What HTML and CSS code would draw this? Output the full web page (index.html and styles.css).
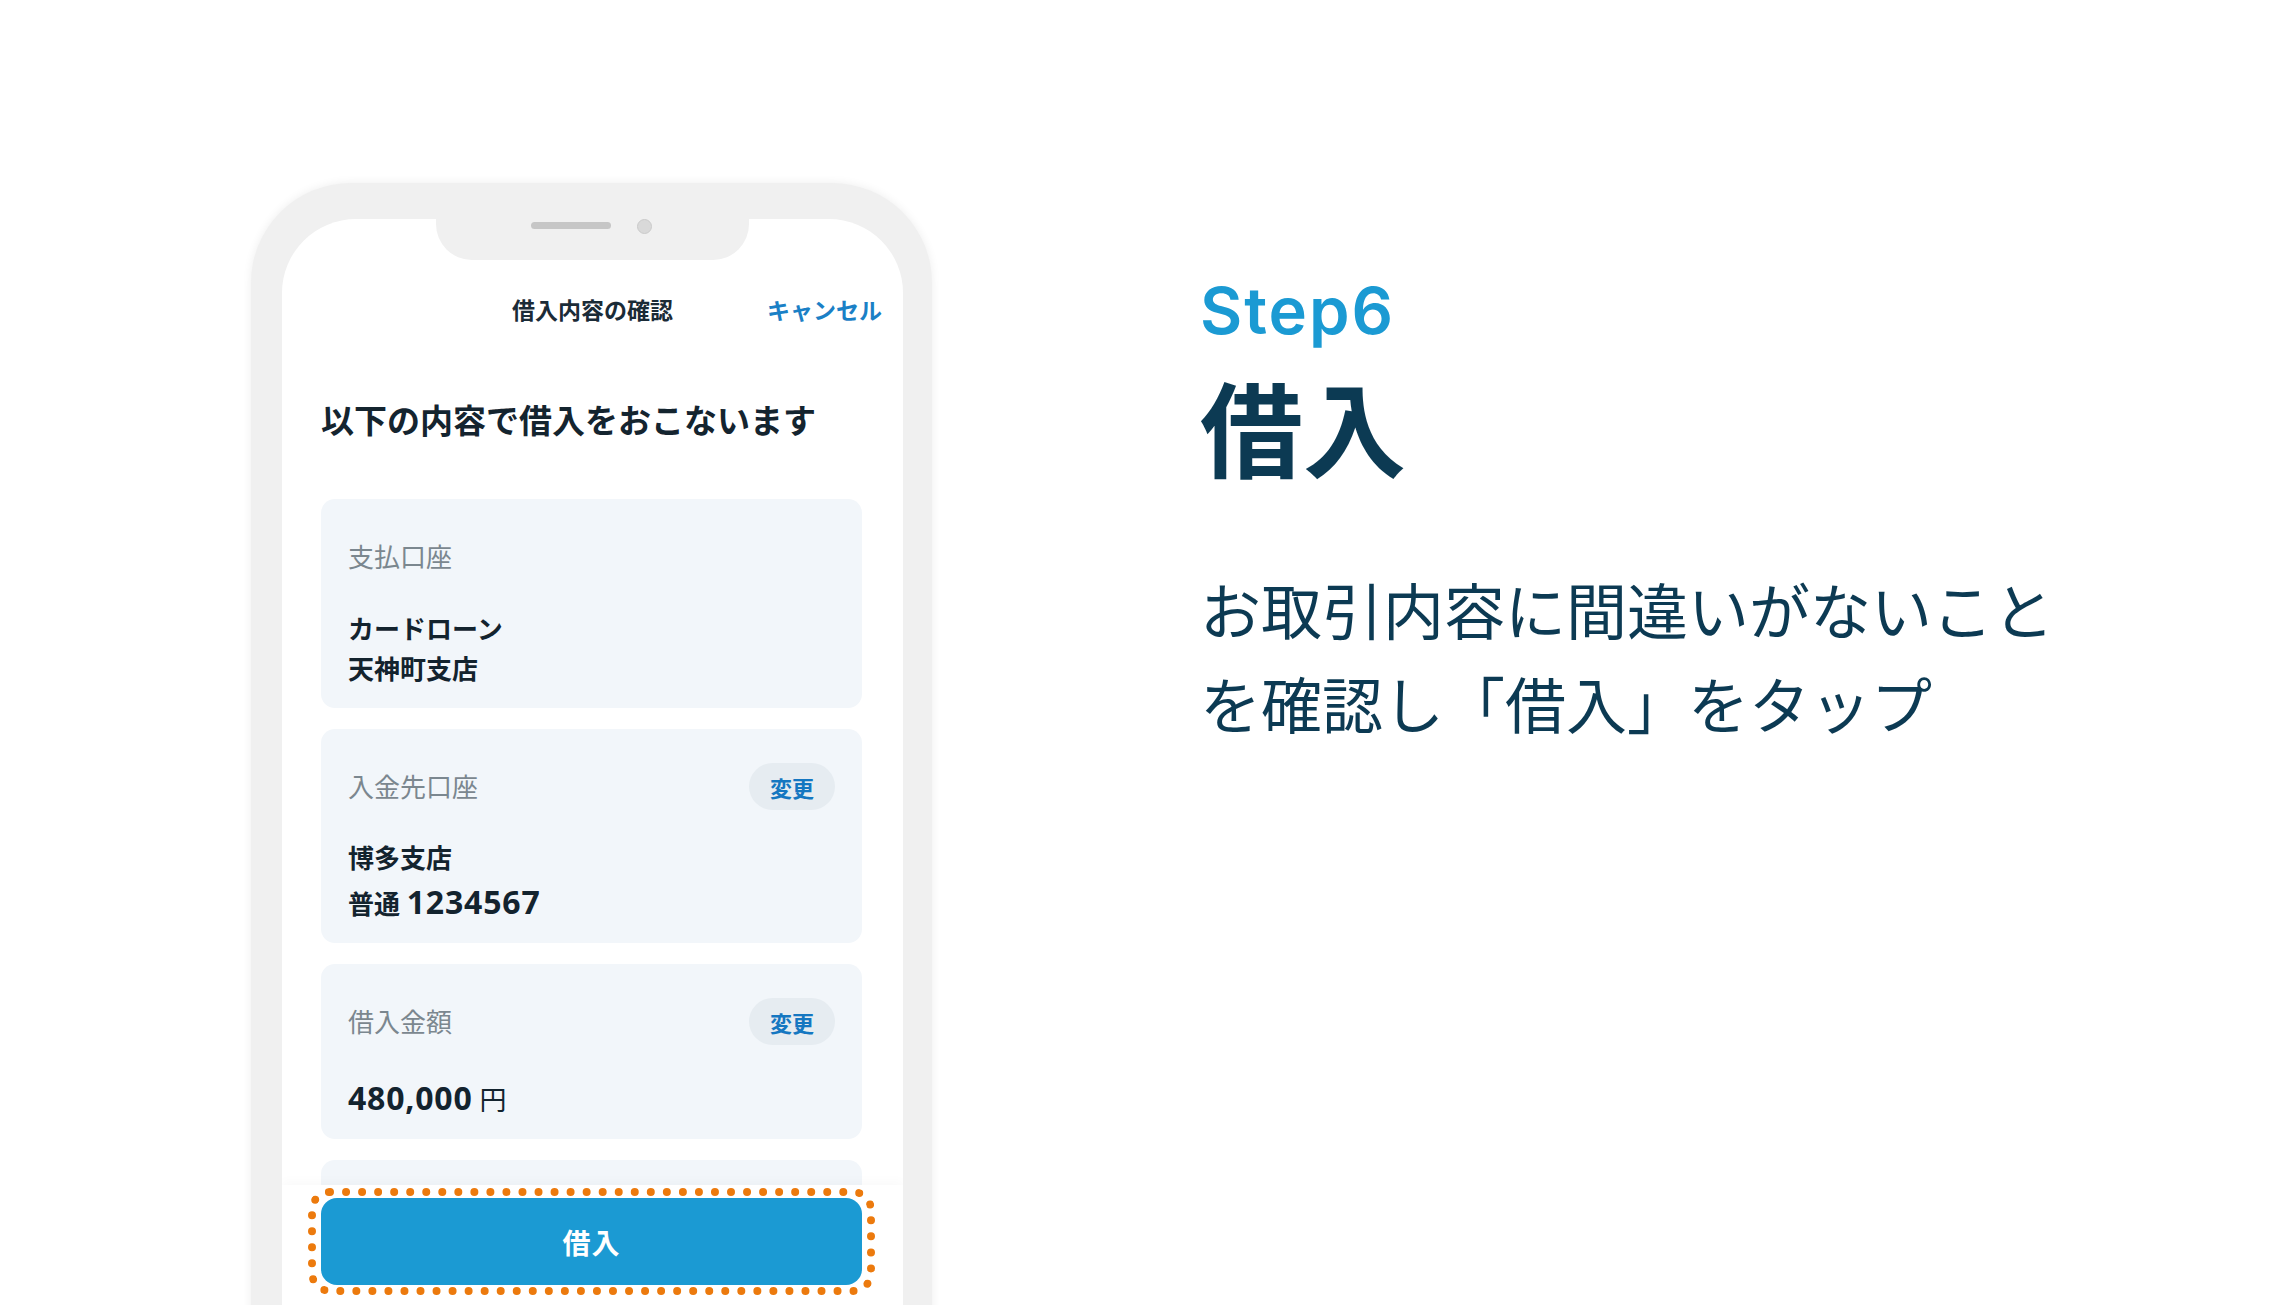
FILE: index.html
```html
<!DOCTYPE html>
<html lang="ja">
<head>
<meta charset="utf-8">
<title>Step6 借入</title>
<link rel="stylesheet" href="styles.css">
</head>
<body>
<div class="page">
  <div class="phone">
    <div class="screen">
      <div class="notch">
        <span class="speaker"></span>
        <span class="camera"></span>
      </div>
      <div class="nav">
        <span class="nav-title">借入内容の確認</span>
        <span class="nav-cancel">キャンセル</span>
      </div>
      <h1 class="lead">以下の内容で借入をおこないます</h1>
      <div class="cards">
        <div class="card">
          <div class="card-head"><span class="label">支払口座</span></div>
          <div class="values v40">
            <div>カードローン</div>
            <div>天神町支店</div>
          </div>
        </div>
        <div class="card">
          <div class="card-head"><span class="label">入金先口座</span><span class="pill">変更</span></div>
          <div class="values v43">
            <div>博多支店</div>
            <div>普通 <span class="num">1234567</span></div>
          </div>
        </div>
        <div class="card">
          <div class="card-head"><span class="label">借入金額</span><span class="pill">変更</span></div>
          <div class="values amount">
            <div><span class="num">480,000</span><span class="yen">円</span></div>
          </div>
        </div>
        <div class="card card-empty"></div>
      </div>
      <div class="footer">
        <div class="focus-ring">
          <div class="primary-btn">借入</div>
        </div>
      </div>
    </div>
  </div>
  <div class="info">
    <div class="step">Step6</div>
    <div class="title">借入</div>
    <p class="desc">お取引内容に間違いがないことを確認し「借入」をタップ</p>
  </div>
</div>
</body>
</html>
```
FILE: styles.css
```css
* { box-sizing: border-box; }
html, body {
  margin: 0;
  padding: 0;
  background: #ffffff;
}
body {
  width: 2290px;
  height: 1305px;
  overflow: hidden;
  font-family: "Noto Sans", "Noto Sans CJK JP", sans-serif;
  color: #13232e;
}
.page {
  display: flex;
  align-items: flex-start;
  padding-left: 251px;
  padding-top: 183px;
}
.phone {
  width: 681px;
  height: 1300px;
  background: #f0f0f0;
  border-radius: 100px 100px 0 0;
  padding: 36px 29px 0 31px;
  box-shadow: 0 0 10px rgba(0, 0, 0, 0.07);
  flex: none;
}
.screen {
  position: relative;
  width: 621px;
  height: 1264px;
  background: #ffffff;
  border-radius: 74px 74px 0 0;
  padding-top: 70px;
  overflow: hidden;
}
.notch {
  position: absolute;
  top: 0;
  left: 154px;
  width: 313px;
  height: 41px;
  background: #f0f0f0;
  border-radius: 0 0 36px 36px;
}
.speaker {
  position: absolute;
  left: 95px;
  top: 3px;
  width: 80px;
  height: 7px;
  border-radius: 4px;
  background: #c6c6c6;
}
.camera {
  position: absolute;
  left: 201px;
  top: 0px;
  width: 15px;
  height: 15px;
  border-radius: 50%;
  background: #d9d9d9;
  border: 1px solid #cacaca;
}
.nav {
  position: relative;
  height: 42px;
  display: flex;
  align-items: center;
  justify-content: center;
}
.nav-title {
  font-size: 23px;
  font-weight: 700;
  line-height: 42px;
  color: #1b2b37;
}
.nav-cancel {
  position: absolute;
  right: 21px;
  top: 0;
  font-size: 23px;
  font-weight: 700;
  line-height: 42px;
  color: #1a80c6;
}
.lead {
  margin: 68px 0 56px 39px;
  font-size: 33px;
  line-height: 44px;
  font-weight: 700;
  color: #14242f;
}
.cards {
  display: flex;
  flex-direction: column;
  gap: 21px;
  padding: 0 41px 0 39px;
}
.card {
  background: #f2f6fa;
  border-radius: 14px;
  padding: 34px 27px 17px 27px;
}
.card-head {
  height: 47px;
  display: flex;
  align-items: center;
  justify-content: space-between;
}
.label {
  font-size: 26px;
  line-height: 36px;
  color: #7b878f;
}
.pill {
  width: 86px;
  height: 47px;
  border-radius: 24px;
  background: #e6ecf1;
  color: #1577c1;
  font-size: 22px;
  font-weight: 700;
  display: flex;
  align-items: center;
  justify-content: center;
}
.values {
  margin-top: 27px;
  font-size: 26px;
  font-weight: 700;
  line-height: 44px;
  color: #13232e;
}
.values.v40 {
  margin-top: 29px;
  line-height: 40px;
  padding-bottom: 2px;
}
.values.v43 {
  line-height: 43px;
}
.values.amount {
  margin-top: 31px;
}
.num {
  font-size: 32px;
  font-weight: 700;
  letter-spacing: 0.8px;
}
.yen {
  font-size: 27px;
  font-weight: 400;
  margin-left: 7px;
}
.card-empty {
  height: 120px;
}
.footer {
  position: absolute;
  left: 0;
  right: 0;
  top: 966px;
  bottom: 0;
  background: rgba(255, 255, 255, 0.96);
  box-shadow: 0 -4px 10px rgba(0, 0, 0, 0.025);
  padding: 3px 28px 0 26px;
}
.focus-ring {
  border: 8px dotted #ec7a0d;
  border-radius: 22px;
  padding: 2px 5px 2px 5px;
}
.primary-btn {
  height: 87px;
  border-radius: 16px;
  background: #1b9ad3;
  color: #ffffff;
  font-size: 28px;
  font-weight: 700;
  display: flex;
  align-items: center;
  justify-content: center;
  letter-spacing: 1px;
}
.info {
  margin-left: 268px;
  padding-top: 91px;
  width: 950px;
}
.step {
  font-family: "Inter", "Liberation Sans", sans-serif;
  font-size: 65px;
  line-height: 74px;
  font-weight: 600;
  color: #1b9ad3;
  letter-spacing: 2px;
}
.title {
  margin-top: 22px;
  font-size: 103px;
  line-height: 120px;
  font-weight: 700;
  color: #0c3a53;
}
.desc {
  margin: 72px 0 0 0;
  width: 900px;
  font-size: 61px;
  line-height: 94px;
  font-weight: 400;
  color: #0c3a53;
  font-family: "Noto Sans CJK JP", sans-serif;
}
```
